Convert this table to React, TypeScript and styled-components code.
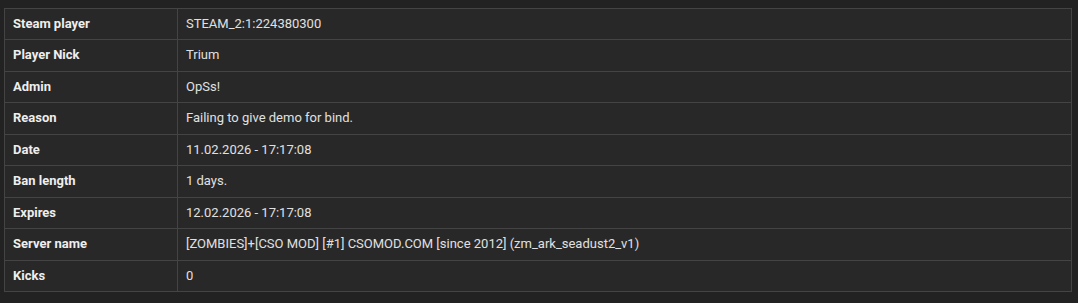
import React from "react";
import styled, { createGlobalStyle } from "styled-components";

const GlobalStyle = createGlobalStyle`
  html, body {
    margin: 0;
    padding: 0;
    background: #222222;
  }
  body {
    font-family: Roboto, "Liberation Sans", Arial, sans-serif;
  }
`;

const Page = styled.div`
  padding: 8px 6px 0 4px;
  background: #222222;
  min-height: 303px;
  box-sizing: border-box;
`;

const Table = styled.table`
  width: 100%;
  border-collapse: collapse;
  background: #282828;
  border: 1px solid #444444;
  font-size: 13px;
  color: #e2e2e2;
`;

const Row = styled.tr`
  border-bottom: 1px solid #444444;
`;

const LabelCell = styled.th`
  width: 156px;
  text-align: left;
  font-weight: 700;
  color: #eeeeee;
  padding: 6px 8px;
  line-height: 18.43px;
  border-right: 1px solid #444444;
  white-space: nowrap;
`;

const ValueCell = styled.td`
  padding: 6px 8px;
  line-height: 18.43px;
  color: #e0e0e0;
`;

const rows: [string, string][] = [
  ["Steam player", "STEAM_2:1:224380300"],
  ["Player Nick", "Trium"],
  ["Admin", "OpSs!"],
  ["Reason", "Failing to give demo for bind."],
  ["Date", "11.02.2026 - 17:17:08"],
  ["Ban length", "1 days."],
  ["Expires", "12.02.2026 - 17:17:08"],
  ["Server name", "[ZOMBIES]+[CSO MOD] [#1] CSOMOD.COM [since 2012] (zm_ark_seadust2_v1)"],
  ["Kicks", "0"],
];

export default function App() {
  return (
    <>
      <GlobalStyle />
      <Page>
        <Table>
          <tbody>
            {rows.map(([label, value]) => (
              <Row key={label}>
                <LabelCell>{label}</LabelCell>
                <ValueCell>{value}</ValueCell>
              </Row>
            ))}
          </tbody>
        </Table>
      </Page>
    </>
  );
}
